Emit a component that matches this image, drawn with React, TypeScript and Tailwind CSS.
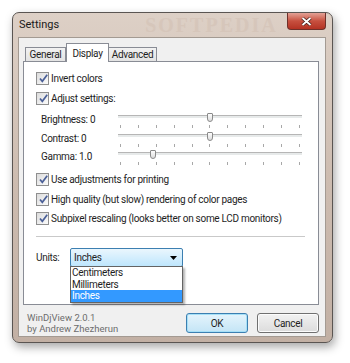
import React from "react";

const font = "font-['Roboto','Noto_Sans',sans-serif]";

function Check() {
  return (
    <span className="relative h-[13px] w-[13px] shrink-0 border border-[#8f8f8f] bg-gradient-to-br from-[#dcdcdc] to-[#fbfbfb]">
      <svg className="absolute left-[1px] top-[0px] h-[11px] w-[11px]" viewBox="0 0 11 11">
        <path d="M2 5.5 L4.3 8.3 L9.2 1.8" fill="none" stroke="#4a5f97" strokeWidth={1.7} />
      </svg>
    </span>
  );
}

function CheckRow({ label, className = "" }: { label: string; className?: string }) {
  return (
    <div className={`flex h-[13px] items-center gap-[2px] ${className}`}>
      <Check />
      <span className="leading-[13px]">{label}</span>
    </div>
  );
}

function Slider({ label, thumb }: { label: string; thumb: number }) {
  const ticks = Array.from({ length: 11 }, (_, i) => i);
  return (
    <div className="flex h-[18.5px] items-start">
      <span className="w-[82px] pl-[5px] pt-[2px] leading-[14px]">{label}</span>
      <div className="relative h-[18px] w-[184px]">
        <div className="absolute left-0 right-0 top-[4px] h-[4px] border-b border-t border-b-white border-t-[#b6b6b6] bg-[#e7eaea]" />
        <div className="absolute left-[2px] right-[2px] top-[14px] flex justify-between">
          {ticks.map((t) => (
            <span key={t} className="h-[3px] w-px bg-[#a8a8a8]" />
          ))}
        </div>
        <div
          className="absolute top-[2px] h-[9px] w-[6px] rounded-b-[3px] rounded-t-[1px] border border-[#8a8a8a] bg-gradient-to-b from-[#fdfdfd] to-[#dcdcdc]"
          style={{ left: thumb }}
        />
      </div>
    </div>
  );
}

export default function App() {
  return (
    <div className={`h-[363px] w-[350px] bg-white pl-[12px] pt-[12px] text-[10px] tracking-[-0.3px] text-[#1e1e1e] ${font}`}>
      <div className="relative h-[331px] w-[321px] rounded-[7px] border border-[#5a5552] bg-gradient-to-b from-[#ddd0c6] via-[#cdbcb0] to-[#c2b0a4] shadow-[2px_4px_10px_rgba(0,0,0,0.35)]">
        {/* title bar */}
        <div className="flex h-[24px] items-center pl-[6px]">
          <span className="text-[11px] tracking-normal text-[#1a1a1a]">Settings</span>
          <span className="ml-[86px] font-['Liberation_Serif',serif] text-[20px] font-bold tracking-[2px] text-[#d2bfb2] opacity-50">SOFTPEDIA</span>
        </div>
        <div className="absolute right-[6px] top-0 flex h-[17px] w-[39px] items-center justify-center rounded-b-[4px] border border-t-0 border-[#6e302a] bg-gradient-to-b from-[#e2a196] via-[#c7503f] to-[#b43223]">
          <svg width="11" height="9" viewBox="0 0 11 9">
            <path d="M1.5 1 L9.5 8 M9.5 1 L1.5 8" stroke="#3a1a16" strokeWidth={3.2} />
            <path d="M1.5 1 L9.5 8 M9.5 1 L1.5 8" stroke="#ffffff" strokeWidth={1.8} />
          </svg>
        </div>

        {/* client area */}
        <div className="absolute bottom-[5px] left-[5px] right-[6px] top-[24px] border border-[#a39a92] bg-[#f0f0f0]">
          {/* tabs */}
          <div className="flex h-[23px] items-end pl-[6px]">
            <div className="flex h-[14px] w-[41px] items-center justify-center border border-b-0 border-[#898c95] bg-gradient-to-b from-[#f2f2f2] to-[#e3e3e3]">General</div>
            <div className="relative z-10 -mb-px flex h-[19px] w-[43px] items-start justify-center border border-b-0 border-[#898c95] bg-white pt-[2px]">Display</div>
            <div className="flex h-[14px] w-[48px] items-center justify-center border border-b-0 border-l-0 border-[#898c95] bg-gradient-to-b from-[#f2f2f2] to-[#e3e3e3]">Advanced</div>
          </div>
          {/* panel */}
          <div className="relative ml-[4px] h-[244px] w-[296px] border border-[#898c95] bg-white pl-[12px] pt-[10px]">
            <CheckRow label="Invert colors" />
            <CheckRow label="Adjust settings:" className="mt-[7px]" />
            <div className="mt-[6px] flex flex-col">
              <Slider label="Brightness: 0" thumb={89} />
              <Slider label="Contrast: 0" thumb={89} />
              <Slider label="Gamma: 1.0" thumb={32} />
            </div>
            <CheckRow label="Use adjustments for printing" className="mt-[6px]" />
            <CheckRow label="High quality (but slow) rendering of color pages" className="mt-[7px]" />
            <CheckRow label="Subpixel rescaling (looks better on some LCD monitors)" className="mt-[6.5px]" />
            <div className="mr-[13px] mt-[11px] h-px bg-[#c9c9c9]" />
            <div className="mt-[11px] flex items-start">
              <span className="w-[34px] pt-[3px] leading-[13px]">Units:</span>
              <div className="relative">
                <div className="flex h-[19px] w-[113px] items-center justify-between rounded-[2px] border border-[#3c7fb1] bg-gradient-to-b from-[#eaf6fd] to-[#bee6fd] pl-[3px] pr-[5px]">
                  <span>Inches</span>
                  <svg width="7" height="4" viewBox="0 0 7 4">
                    <path d="M0 0 H7 L3.5 4 Z" fill="#000" />
                  </svg>
                </div>
                <div className="absolute left-0 top-[18px] z-20 flex w-[113px] flex-col border border-[#646464] bg-white shadow-[2px_2px_2px_rgba(0,0,0,0.3)]">
                  <span className="h-[11.5px] pl-[1px] leading-[11.5px]">Centimeters</span>
                  <span className="h-[11.5px] pl-[1px] leading-[11.5px]">Millimeters</span>
                  <span className="h-[11.5px] bg-[#3399ff] pl-[1px] leading-[11.5px] text-white">Inches</span>
                </div>
              </div>
            </div>
          </div>
          {/* footer */}
          <div className="flex items-start pl-[8px] pt-[7px]">
            <div className="flex flex-col text-[9.5px] leading-[11px] tracking-normal text-[#6d6d6d]">
              <span>WinDjView 2.0.1</span>
              <span>by Andrew Zhezherun</span>
            </div>
            <div className="ml-auto mr-[6px] mt-[1px] flex gap-[9px]">
              <button className="h-[20px] w-[62px] rounded-[3px] border border-[#3c7fb1] bg-gradient-to-b from-[#e5f4fc] to-[#c4e5f6] text-[#1e1e1e] shadow-[inset_0_0_0_1px_#a6e0f7]">OK</button>
              <button className="h-[20px] w-[62px] rounded-[3px] border border-[#707070] bg-gradient-to-b from-[#f2f2f2] to-[#dcdcdc] text-[#1e1e1e] shadow-[inset_0_0_0_1px_#fcfcfc]">Cancel</button>
            </div>
          </div>
        </div>
      </div>
    </div>
  );
}
